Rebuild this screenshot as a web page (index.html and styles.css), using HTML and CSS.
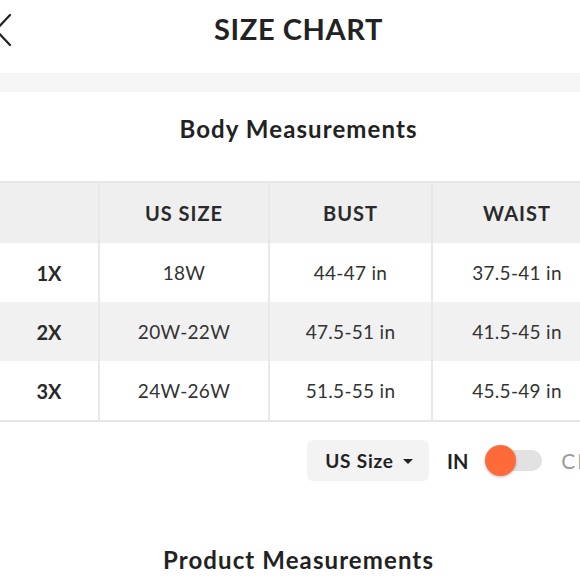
FILE: index.html
```html
<!DOCTYPE html>
<html>
<head>
<meta charset="utf-8">
<link rel="stylesheet" href="styles.css">
</head>
<body>
<div class="page">
  <header class="topbar">
    <svg class="back" width="20" height="34" viewBox="0 0 20 34"><path d="M17 2 L3 17 L17 32" fill="none" stroke="#222" stroke-width="2.2" stroke-linecap="round" stroke-linejoin="round"/></svg>
    <h1 class="title">SIZE CHART</h1>
  </header>
  <div class="band"></div>
  <h2 class="section-title first">Body Measurements</h2>
  <div class="table-wrap">
    <table class="chart">
      <thead>
        <tr><th class="c0"></th><th class="c1">US SIZE</th><th class="c2">BUST</th><th class="c3">WAIST</th></tr>
      </thead>
      <tbody>
        <tr><th class="c0">1X</th><td>18W</td><td>44-47 in</td><td>37.5-41 in</td></tr>
        <tr class="alt"><th class="c0">2X</th><td>20W-22W</td><td>47.5-51 in</td><td>41.5-45 in</td></tr>
        <tr><th class="c0">3X</th><td>24W-26W</td><td>51.5-55 in</td><td>45.5-49 in</td></tr>
      </tbody>
    </table>
  </div>
  <div class="controls">
    <button class="select">US Size <span class="caret"></span></button>
    <span class="unit on">IN</span>
    <span class="toggle"><span class="knob"></span></span>
    <span class="unit off">CM</span>
  </div>
  <h2 class="section-title second">Product Measurements</h2>
</div>
</body>
</html>
```
FILE: styles.css
```css
html, body {
  margin: 0;
  padding: 0;
  background: #fff;
  overflow: hidden;
  width: 580px;
  height: 580px;
}
body {
  font-family: "Lato", "Noto Sans", sans-serif;
  color: #222;
}
.page {
  width: 631px;
  margin-left: -17px;
}
.topbar {
  position: relative;
  height: 58px;
  margin-bottom: 15px;
  display: flex;
  align-items: center;
  justify-content: center;
}
.back {
  position: absolute;
  left: 10px;
  top: 13px;
}
.title {
  margin: 0;
  font-size: 29px;
  font-weight: 700;
  letter-spacing: 0.6px;
  line-height: 34px;
}
.band {
  height: 19px;
  background: #f5f5f5;
}
.section-title {
  margin: 0;
  text-align: center;
  font-size: 24px;
  font-weight: 700;
  letter-spacing: 1.1px;
  line-height: 30px;
}
.section-title.first {
  margin-top: 22px;
}
.section-title.second {
  margin-top: 64px;
}
.table-wrap {
  margin-top: 37px;
  padding-left: 17px;
}
.chart {
  border-collapse: collapse;
  table-layout: fixed;
  width: 601px;
  border-top: 2px solid #e6e6e6;
  border-bottom: 2px solid #e6e6e6;
}
.chart th, .chart td {
  height: 59px;
  padding: 0;
  text-align: center;
  border-left: 2px solid #e8e8e8;
  font-size: 19px;
}
.chart .c0 { width: 98px; border-left: none; }
.chart .c1 { width: 168px; }
.chart .c2 { width: 161px; }
.chart .c3 { width: 168px; }
.chart thead tr { background: #efefef; }
.chart thead th {
  font-size: 20px;
  font-weight: 700;
  letter-spacing: 1px;
  color: #2a2a2a;
  height: 60px;
}
.chart tbody th {
  font-weight: 700;
  font-size: 20px;
  color: #2a2a2a;
}
.chart td {
  font-weight: 400;
  color: #333;
  letter-spacing: 0.3px;
}
.chart tr.alt { background: #f1f1f1; }
.controls {
  margin-top: 18px;
  display: flex;
  align-items: center;
  padding-left: 324px;
}
.select {
  font-family: inherit;
  font-size: 19px;
  font-weight: 700;
  letter-spacing: 0.8px;
  color: #222;
  background: #f3f3f3;
  border: none;
  border-radius: 6px;
  height: 41px;
  width: 122px;
  padding: 0 0 0 2px;
  display: flex;
  align-items: center;
  justify-content: center;
  gap: 9px;
}
.caret {
  width: 0;
  height: 0;
  border-left: 5.5px solid transparent;
  border-right: 5.5px solid transparent;
  border-top: 5px solid #222;
  margin-top: 2px;
}
.unit {
  font-size: 20px;
  font-weight: 700;
}
.unit.on { margin-left: 18px; }
.unit.off {
  color: #9a9a9a;
  font-weight: 400;
  font-size: 21px;
  letter-spacing: 2px;
  margin-left: 19px;
}
.toggle {
  position: relative;
  margin-left: 18px;
  width: 56px;
  height: 21px;
  border-radius: 11px;
  background: #e2e2e2;
}
.knob {
  position: absolute;
  left: -1px;
  top: -5px;
  width: 31px;
  height: 31px;
  border-radius: 50%;
  background: #ff6a3b;
  box-shadow: 0 1px 3px rgba(0,0,0,0.25);
}
```
